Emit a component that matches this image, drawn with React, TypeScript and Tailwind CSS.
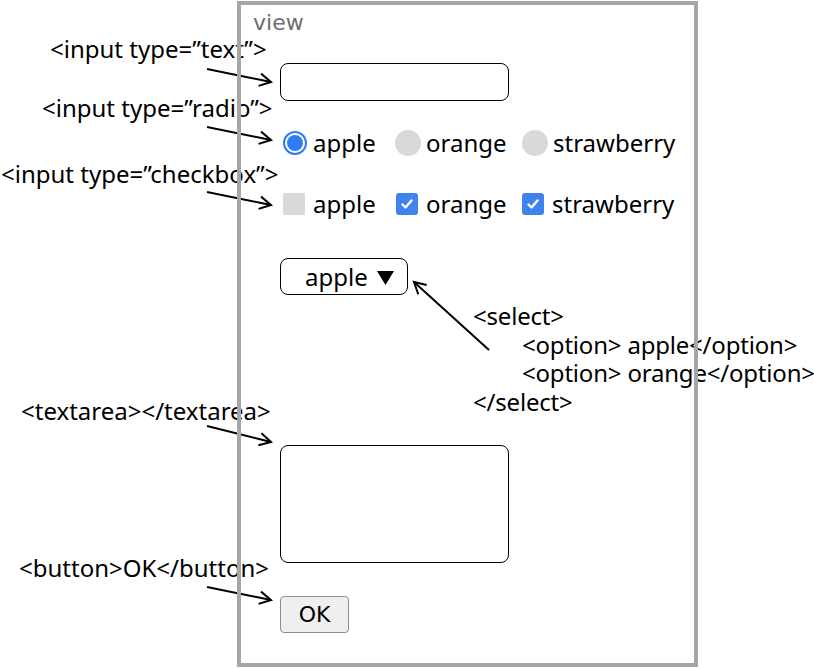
const arrows: [number, number, number, number][] = [
  [207, 69, 271, 82],
  [207, 127, 271, 140],
  [207, 192, 271, 205],
  [489, 350, 414, 282],
  [207, 426, 271, 442],
  [207, 587, 271, 600],
];

function head(x1: number, y1: number, x2: number, y2: number) {
  const a = Math.atan2(y1 - y2, x1 - x2);
  const len = 13;
  const s = 0.5;
  const p1 = [x2 + len * Math.cos(a + s), y2 + len * Math.sin(a + s)];
  const p2 = [x2 + len * Math.cos(a - s), y2 + len * Math.sin(a - s)];
  return `${p1[0]},${p1[1]} ${x2},${y2} ${p2[0]},${p2[1]}`;
}

const Check = () => (
  <span className="w-[22px] h-[22px] rounded-[3px] bg-[#4083ec] flex items-center justify-center">
    <svg width="14" height="14" viewBox="0 0 14 14">
      <path d="M2.5 7.5 L5.5 10.5 L11.5 3.5" fill="none" stroke="white" strokeWidth="2.4" strokeLinecap="round" strokeLinejoin="round" />
    </svg>
  </span>
);

export default function App() {
  return (
    <div className="relative w-[814px] h-[668px] bg-white overflow-hidden font-['Noto_Sans',sans-serif] text-black">
      {/* annotations */}
      <div className="absolute left-[50px] top-[33px] text-[24px] leading-[32px] whitespace-nowrap">{'<input type=”text”>'}</div>
      <div className="absolute left-[42px] top-[92px] text-[24px] leading-[32px] whitespace-nowrap">{'<input type=”radio”>'}</div>
      <div className="absolute left-[1px] top-[158px] text-[24px] leading-[32px] whitespace-nowrap">{'<input type=”checkbox”>'}</div>
      <div className="absolute left-[473px] top-[302px] text-[24px] leading-[28.5px] tracking-[-0.2px] whitespace-nowrap">
        <div>{'<select>'}</div>
        <div className="pl-[49px]">{'<option> apple</option>'}</div>
        <div className="pl-[49px]">{'<option> orange</option>'}</div>
        <div>{'</select>'}</div>
      </div>
      <div className="absolute left-[21px] top-[395px] text-[24px] leading-[32px] whitespace-nowrap">{'<textarea></textarea>'}</div>
      <div className="absolute left-[19px] top-[552px] text-[24px] leading-[32px] whitespace-nowrap">{'<button>OK</button>'}</div>
      <svg className="absolute inset-0 pointer-events-none" width="814" height="668">
        {arrows.map(([x1, y1, x2, y2], i) => (
          <g key={i} stroke="black" strokeWidth="2" fill="none">
            <line x1={x1} y1={y1} x2={x2} y2={y2} />
            <polyline points={head(x1, y1, x2, y2)} />
          </g>
        ))}
      </svg>

      {/* view panel */}
      <div className="relative z-10 ml-[237px] mt-[1px] w-[461px] h-[666px] border-4 border-[#a6a6a6] flex flex-col">
        <div className="mt-[5px] pl-[12px] h-[26px] leading-[26px] text-[22px] text-[#6e6e6e] font-['DejaVu_Sans',sans-serif]">view</div>

        <input type="text" className="ml-[39px] mt-[27px] w-[229px] h-[38px] rounded-[8px] border border-black bg-transparent" />

        <div className="ml-[42px] mt-[26px] h-[32px] grid grid-cols-[112px_127px_auto] items-center text-[24px] leading-[32px]">
          <div className="flex items-center gap-[6px]">
            <span className="w-[24px] h-[24px] rounded-full border-2 border-[#2f7df6] p-[2px] bg-white">
              <span className="block w-full h-full rounded-full bg-[#2f7df6]" />
            </span>
            <span>apple</span>
          </div>
          <div className="flex items-center gap-[5px]">
            <span className="w-[26px] h-[26px] rounded-full bg-[#d9d9d9]" />
            <span>orange</span>
          </div>
          <div className="flex items-center gap-[5px]">
            <span className="w-[26px] h-[26px] rounded-full bg-[#d9d9d9]" />
            <span>strawberry</span>
          </div>
        </div>

        <div className="ml-[42px] mt-[29px] h-[32px] grid grid-cols-[112px_127px_auto] items-center text-[24px] leading-[32px]">
          <div className="flex items-center gap-[8px]">
            <span className="w-[22px] h-[22px] bg-[#d9d9d9]" />
            <span>apple</span>
          </div>
          <div className="flex items-center gap-[8px] pl-[1px]">
            <Check />
            <span>orange</span>
          </div>
          <div className="flex items-center gap-[8px]">
            <Check />
            <span>strawberry</span>
          </div>
        </div>

        <div className="ml-[39px] mt-[38px] w-[128px] h-[37px] rounded-[8px] border border-black flex items-center pl-[24px] text-[24px] leading-[32px]">
          <span>apple</span>
          <svg className="ml-[9px] mt-[3px]" width="17" height="14" viewBox="0 0 17 14">
            <polygon points="0,0 17,0 8.5,14" fill="black" />
          </svg>
        </div>

        <textarea className="ml-[39px] mt-[150px] w-[229px] h-[118px] rounded-[8px] border border-black resize-none bg-transparent" />

        <button className="ml-[39px] mt-[33px] w-[69px] h-[37px] rounded-[4px] border border-[#8f8f8f] bg-[#efefef] text-[22px] leading-[26px] font-['DejaVu_Sans',sans-serif] text-black">
          OK
        </button>
      </div>
    </div>
  );
}
